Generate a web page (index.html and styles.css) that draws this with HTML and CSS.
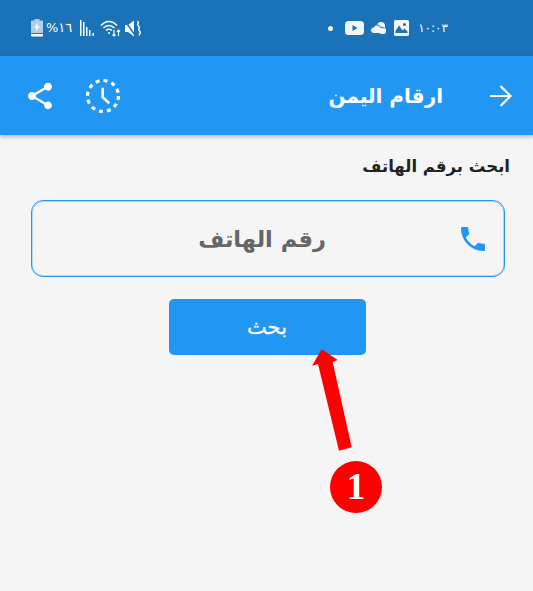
FILE: index.html
```html
<!DOCTYPE html>
<html lang="ar" dir="rtl">
<head>
    <meta charset="UTF-8">
    <meta name="viewport" content="width=device-width, initial-scale=1.0">
    <title>ارقام اليمن</title>
    <link rel="stylesheet" href="styles.css">
</head>
<body>
    <div class="status-bar" dir="ltr">
        <div class="status-group">
            <svg class="ic-battery" width="12" height="18" viewBox="0 0 12 18">
                <path fill="#e3eef8" opacity="0.75" d="M3.5 0h5v1.5H11a1 1 0 0 1 1 1V14H0V2.5a1 1 0 0 1 1-1h2.5z"/>
                <path fill="#fff" d="M7 3 3 9h2.5L4.5 13 9 7H6.3z"/>
                <path fill="#fff" d="M0 15h12v1.5a1 1 0 0 1-1 1H1a1 1 0 0 1-1-1z"/>
            </svg>
            <span class="status-text battery-text">%١٦</span>
            <svg class="ic-signal" width="15" height="16" viewBox="0 0 15 16" fill="#fff">
                <rect x="0" y="0" width="1.5" height="16"/>
                <rect x="3" y="2" width="1.5" height="14"/>
                <rect x="6" y="7" width="1.5" height="9"/>
                <rect x="9" y="10" width="1.5" height="6"/>
                <rect x="12.5" y="13" width="1.5" height="3"/>
            </svg>
            <svg class="ic-wifi" width="21" height="17" viewBox="0 0 21 17" fill="none" stroke="#fff" stroke-width="1.5">
                <path d="M1 5.5C5.5 0 12.5 0 17 5.5"/>
                <path d="M3.5 8C6.8 4.5 11.2 4.5 14.5 8"/>
                <path d="M6 10.5C8 8.8 10 8.8 12 10.5"/>
                <circle cx="9" cy="13" r="1" fill="#fff" stroke="none"/>
                <path d="M14 10v6M12.500 14.500 14 16l1.500-1.500M18.500 16v-6M17 11.500 18.500 10l1.500 1.500" stroke-width="1.2"/>
            </svg>
            <svg class="ic-mute" width="16" height="17" viewBox="0 0 16 17">
                <path fill="#fff" d="M0 5h3l6-4.500v16L3 12H0z"/>
                <path fill="none" stroke="#1a72b8" stroke-width="1.5" d="M0 1l10 14"/>
                <path fill="none" stroke="#fff" stroke-width="1.5" d="M12.500 1c2.500 2-1.500 3 1 5s-1.500 3 1 5-1 2.500 0 4.500"/>
            </svg>
        </div>
        <div class="status-group">
            <span class="status-dot"></span>
            <svg class="ic-youtube" width="19" height="14" viewBox="0 0 19 14">
                <rect width="19" height="14" rx="3.5" fill="#f2f6fb"/>
                <path fill="#1a72b8" d="M7.500 4v6l5-3z"/>
            </svg>
            <svg class="ic-cloud" width="16" height="12" viewBox="0 0 16 12">
                <circle cx="11" cy="4" r="4" fill="#f2f6fb"/>
                <path fill="#f2f6fb" stroke="#1a72b8" d="M4 11.500a3.200 3.200 0 0 1-.4-6.400A3.600 3.600 0 0 1 10.400 5.500 3 3 0 0 1 13 11.500z"/>
                <path fill="#f2f6fb" d="M14 6.500h2v3a2.500 2.500 0 0 1-2.500 2.500H10z"/>
            </svg>
            <svg class="ic-image" width="15" height="16" viewBox="0 0 15 16">
                <rect width="15" height="16" rx="1.5" fill="#f2f6fb"/>
                <circle cx="10.5" cy="4.5" r="1.5" fill="#1a72b8"/>
                <path fill="#1a72b8" d="M1.500 11 5 5.500l3.500 5 2-2 3 3v1.500h-12z"/>
            </svg>
            <span class="status-text time" dir="ltr">١٠:٠٣</span>
        </div>
    </div>

    <header class="app-bar">
        <svg class="ic-back" width="24" height="24" viewBox="0 0 24 24" fill="none" stroke="#fff" stroke-width="2.2">
            <path d="M2 12h20M12.500 2l10 10-10 10"/>
        </svg>
        <h1 class="app-title">ارقام اليمن</h1>
        <div class="app-actions">
            <svg class="ic-history" width="36" height="36" viewBox="0 0 36 36" fill="none" stroke="#fff">
                <circle cx="18" cy="18" r="15.5" stroke-width="3.2" stroke-dasharray="4 4.12"/>
                <path d="M17.700 9.800v9.400l6.600 6" stroke-width="2.6"/>
            </svg>
            <svg class="ic-share" width="32" height="32" viewBox="0 0 24 24" fill="#fff">
                <path d="M18 16.080c-.76 0-1.440.3-1.960.77L8.910 12.700c.05-.23.09-.46.09-.7s-.04-.47-.09-.7l7.050-4.110c.54.5 1.250.81 2.040.81 1.660 0 3-1.340 3-3s-1.340-3-3-3-3 1.340-3 3c0 .24.04.47.09.7L8.040 9.810C7.500 9.310 6.790 9 6 9c-1.660 0-3 1.340-3 3s1.340 3 3 3c.79 0 1.500-.31 2.040-.81l7.120 4.160c-.05.21-.08.43-.08.65 0 1.610 1.310 2.920 2.920 2.920 1.610 0 2.920-1.310 2.920-2.920s-1.310-2.920-2.920-2.920z"/>
            </svg>
        </div>
    </header>

    <main class="content">
        <p class="search-label">ابحث برقم الهاتف</p>
        <div class="phone-field">
            <svg class="ic-phone" width="32" height="32" viewBox="0 0 24 24" fill="#2196f3">
                <path d="M6.620 10.790c1.440 2.830 3.760 5.140 6.590 6.590l2.200-2.200c.27-.27.67-.36 1.020-.24 1.120.37 2.330.57 3.570.57.55 0 1 .45 1 1V20c0 .55-.45 1-1 1-9.390 0-17-7.610-17-17 0-.55.45-1 1-1h3.500c.55 0 1 .45 1 1 0 1.250.2 2.450.57 3.570.11.35.03.74-.25 1.020l-2.200 2.200z"/>
            </svg>
            <span class="phone-placeholder">رقم الهاتف</span>
        </div>
        <button class="btn-search">بحث</button>
    </main>

    <!-- red arrow + number added on top of the screenshot -->
    <svg class="note-arrow" width="533" height="591" viewBox="0 0 533 591">
        <path fill="#ff0000" d="M321.700 349.300 337.700 360 332.700 362 351.700 447.300 339 450.700 318 364 312 365.700z"/>
    </svg>
    <div class="note-badge">1</div>
</body>
</html>
```

FILE: styles.css
```css
html, body {
    margin: 0;
    padding: 0;
}
body {
    width: 533px;
    height: 591px;
    overflow: hidden;
    position: relative;
    background-color: #f5f5f5;
    font-family: "DejaVu Sans", sans-serif;
}
.status-bar {
    height: 56px;
    box-sizing: border-box;
    padding: 0 85px 0 31px;
    background-color: #1a72b8;
    display: flex;
    justify-content: space-between;
    align-items: center;
    color: #fff;
}
.status-group {
    display: flex;
    align-items: center;
}
.status-text {
    font-size: 13px;
    line-height: 18px;
}
.battery-text {
    margin: 0 8px 0 3px;
}
.ic-wifi {
    margin: 0 4px 0 5px;
}
.status-dot {
    width: 5px;
    height: 5px;
    border-radius: 50%;
    background: #f2f6fb;
    margin-right: 12px;
}
.ic-cloud {
    margin: 0 8px 0 6px;
}
.time {
    margin-left: 9px;
    font-size: 12px;
}
.app-bar {
    height: 79px;
    box-sizing: border-box;
    padding: 0 21px 0 24px;
    background-color: #2196f3;
    display: flex;
    align-items: center;
    color: #fff;
    box-shadow: 0 2px 4px rgba(0, 0, 0, 0.25);
}
.app-title {
    margin: 0 45px 0 0;
    font-size: 20px;
    font-weight: bold;
}
.app-actions {
    margin-right: auto;
    display: flex;
    align-items: center;
    gap: 29px;
}
.content {
    padding: 19px 23px 0 28px;
    display: flex;
    flex-direction: column;
}
.search-label {
    margin: 0 0 21px 0;
    font-size: 16.5px;
    line-height: 25px;
    font-weight: bold;
    color: #222;
}
.phone-field {
    height: 77px;
    box-sizing: border-box;
    width: 474px;
    margin: 0 5px 0 0;
    border: 1px solid #2196f3;
    box-shadow: inset 0 0 0 1px rgba(33, 150, 243, 0.3);
    border-radius: 12px;
    padding: 0 15px 0 0;
    display: flex;
    align-items: center;
    background: #f5f5f5;
}
.phone-placeholder {
    margin-right: 131px;
    font-size: 22.5px;
    font-weight: bold;
    color: #666;
}
.btn-search {
    align-self: center;
    width: 197px;
    height: 56px;
    margin: 22px 4px 0 0;
    border: none;
    border-radius: 5px;
    background-color: #2196f3;
    color: #fff;
    font-family: inherit;
    font-size: 21px;
    font-weight: normal;
    -webkit-text-stroke: 0.3px #fff;
}
.note-arrow {
    position: absolute;
    top: 0;
    left: 0;
}
.note-badge {
    position: absolute;
    left: 330px;
    top: 461px;
    width: 52px;
    height: 52px;
    border-radius: 50%;
    background: #ff0000;
    color: #fff;
    font-family: "Liberation Serif", serif;
    font-size: 37px;
    font-weight: bold;
    line-height: 52px;
    text-align: center;
}
```
